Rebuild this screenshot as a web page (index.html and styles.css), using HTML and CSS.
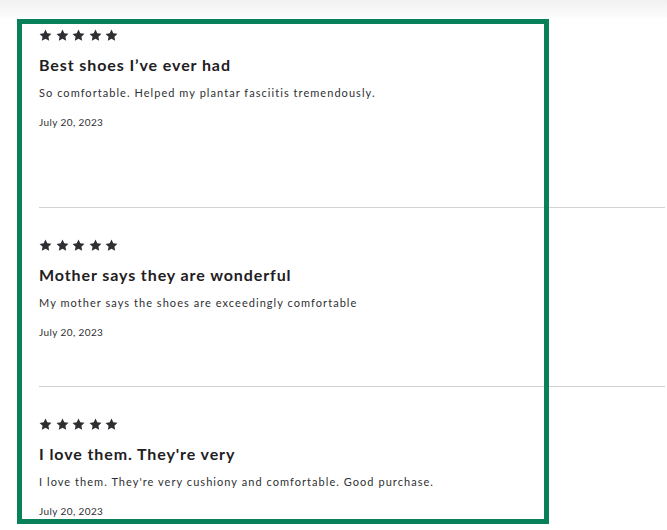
FILE: index.html
```html
<!DOCTYPE html>
<html lang="en">
<head>
<meta charset="utf-8">
<title>Reviews</title>
<link rel="stylesheet" href="styles.css">
</head>
<body>
<div class="header-shadow"></div>
<main class="page">
  <section class="reviews">
    <article class="review review--tall">
      <div class="stars" aria-label="5 out of 5 stars">
        <svg class="star" viewBox="0 0 24 24"><path d="M12 1l3.3 6.9 7.7 1-5.6 5.3 1.4 7.6L12 18.1l-6.8 3.7 1.4-7.6L1 9l7.7-1.1z"/></svg>
        <svg class="star" viewBox="0 0 24 24"><path d="M12 1l3.3 6.9 7.7 1-5.6 5.3 1.4 7.6L12 18.1l-6.8 3.7 1.4-7.6L1 9l7.7-1.1z"/></svg>
        <svg class="star" viewBox="0 0 24 24"><path d="M12 1l3.3 6.9 7.7 1-5.6 5.3 1.4 7.6L12 18.1l-6.8 3.7 1.4-7.6L1 9l7.7-1.1z"/></svg>
        <svg class="star" viewBox="0 0 24 24"><path d="M12 1l3.3 6.9 7.7 1-5.6 5.3 1.4 7.6L12 18.1l-6.8 3.7 1.4-7.6L1 9l7.7-1.1z"/></svg>
        <svg class="star" viewBox="0 0 24 24"><path d="M12 1l3.3 6.9 7.7 1-5.6 5.3 1.4 7.6L12 18.1l-6.8 3.7 1.4-7.6L1 9l7.7-1.1z"/></svg>
      </div>
      <h3 class="review-title">Best shoes I’ve ever had</h3>
      <p class="review-text">So comfortable. Helped my plantar fasciitis tremendously.</p>
      <p class="review-date">July 20, 2023</p>
    </article>
    <article class="review">
      <div class="stars" aria-label="5 out of 5 stars">
        <svg class="star" viewBox="0 0 24 24"><path d="M12 1l3.3 6.9 7.7 1-5.6 5.3 1.4 7.6L12 18.1l-6.8 3.7 1.4-7.6L1 9l7.7-1.1z"/></svg>
        <svg class="star" viewBox="0 0 24 24"><path d="M12 1l3.3 6.9 7.7 1-5.6 5.3 1.4 7.6L12 18.1l-6.8 3.7 1.4-7.6L1 9l7.7-1.1z"/></svg>
        <svg class="star" viewBox="0 0 24 24"><path d="M12 1l3.3 6.9 7.7 1-5.6 5.3 1.4 7.6L12 18.1l-6.8 3.7 1.4-7.6L1 9l7.7-1.1z"/></svg>
        <svg class="star" viewBox="0 0 24 24"><path d="M12 1l3.3 6.9 7.7 1-5.6 5.3 1.4 7.6L12 18.1l-6.8 3.7 1.4-7.6L1 9l7.7-1.1z"/></svg>
        <svg class="star" viewBox="0 0 24 24"><path d="M12 1l3.3 6.9 7.7 1-5.6 5.3 1.4 7.6L12 18.1l-6.8 3.7 1.4-7.6L1 9l7.7-1.1z"/></svg>
      </div>
      <h3 class="review-title">Mother says they are wonderful</h3>
      <p class="review-text">My mother says the shoes are exceedingly comfortable</p>
      <p class="review-date">July 20, 2023</p>
    </article>
    <article class="review">
      <div class="stars" aria-label="5 out of 5 stars">
        <svg class="star" viewBox="0 0 24 24"><path d="M12 1l3.3 6.9 7.7 1-5.6 5.3 1.4 7.6L12 18.1l-6.8 3.7 1.4-7.6L1 9l7.7-1.1z"/></svg>
        <svg class="star" viewBox="0 0 24 24"><path d="M12 1l3.3 6.9 7.7 1-5.6 5.3 1.4 7.6L12 18.1l-6.8 3.7 1.4-7.6L1 9l7.7-1.1z"/></svg>
        <svg class="star" viewBox="0 0 24 24"><path d="M12 1l3.3 6.9 7.7 1-5.6 5.3 1.4 7.6L12 18.1l-6.8 3.7 1.4-7.6L1 9l7.7-1.1z"/></svg>
        <svg class="star" viewBox="0 0 24 24"><path d="M12 1l3.3 6.9 7.7 1-5.6 5.3 1.4 7.6L12 18.1l-6.8 3.7 1.4-7.6L1 9l7.7-1.1z"/></svg>
        <svg class="star" viewBox="0 0 24 24"><path d="M12 1l3.3 6.9 7.7 1-5.6 5.3 1.4 7.6L12 18.1l-6.8 3.7 1.4-7.6L1 9l7.7-1.1z"/></svg>
      </div>
      <h3 class="review-title">I love them. They're very</h3>
      <p class="review-text">I love them. They're very cushiony and comfortable. Good purchase.</p>
      <p class="review-date">July 20, 2023</p>
    </article>
  </section>
  <div class="focus-ring"></div>
</main>
</body>
</html>
```

FILE: styles.css
```css
* { box-sizing: border-box; }

html, body {
  margin: 0;
  padding: 0;
  background: #ffffff;
  height: 100%;
  overflow: hidden;
}

body {
  font-family: Lato, "Open Sans", Arial, sans-serif;
  color: #2e2f32;
}

.header-shadow {
  height: 18px;
  background: linear-gradient(to bottom, #f1f1f1, #fdfdfd);
}

.page {
  position: relative;
}

.reviews {
  display: flex;
  flex-direction: column;
  margin: 0 2px 0 39px;
  padding-top: 11px;
}

.review {
  display: flex;
  flex-direction: column;
  padding-bottom: 47px;
}

.review--tall {
  padding-bottom: 78px;
}

.review + .review {
  border-top: 1px solid #d3d3d3;
  padding-top: 31px;
}

.stars {
  display: flex;
  gap: 3.5px;
  height: 13px;
}

.star {
  width: 13px;
  height: 13px;
  fill: #2e2f32;
}

.review-title {
  margin: 13px 0 0;
  font-size: 16px;
  line-height: 20px;
  font-weight: 700;
  letter-spacing: 0.9px;
  color: #1f2023;
}

.review-text {
  margin: 10px 0 0;
  font-size: 11px;
  line-height: 16px;
  letter-spacing: 1.05px;
}

.review-date {
  margin: 14px 0 0;
  font-size: 10px;
  line-height: 14px;
  letter-spacing: 0.4px;
}

.focus-ring {
  position: absolute;
  left: 17px;
  top: 1px;
  width: 532px;
  height: 505px;
  border: 5px solid #08805a;
  pointer-events: none;
}
```
